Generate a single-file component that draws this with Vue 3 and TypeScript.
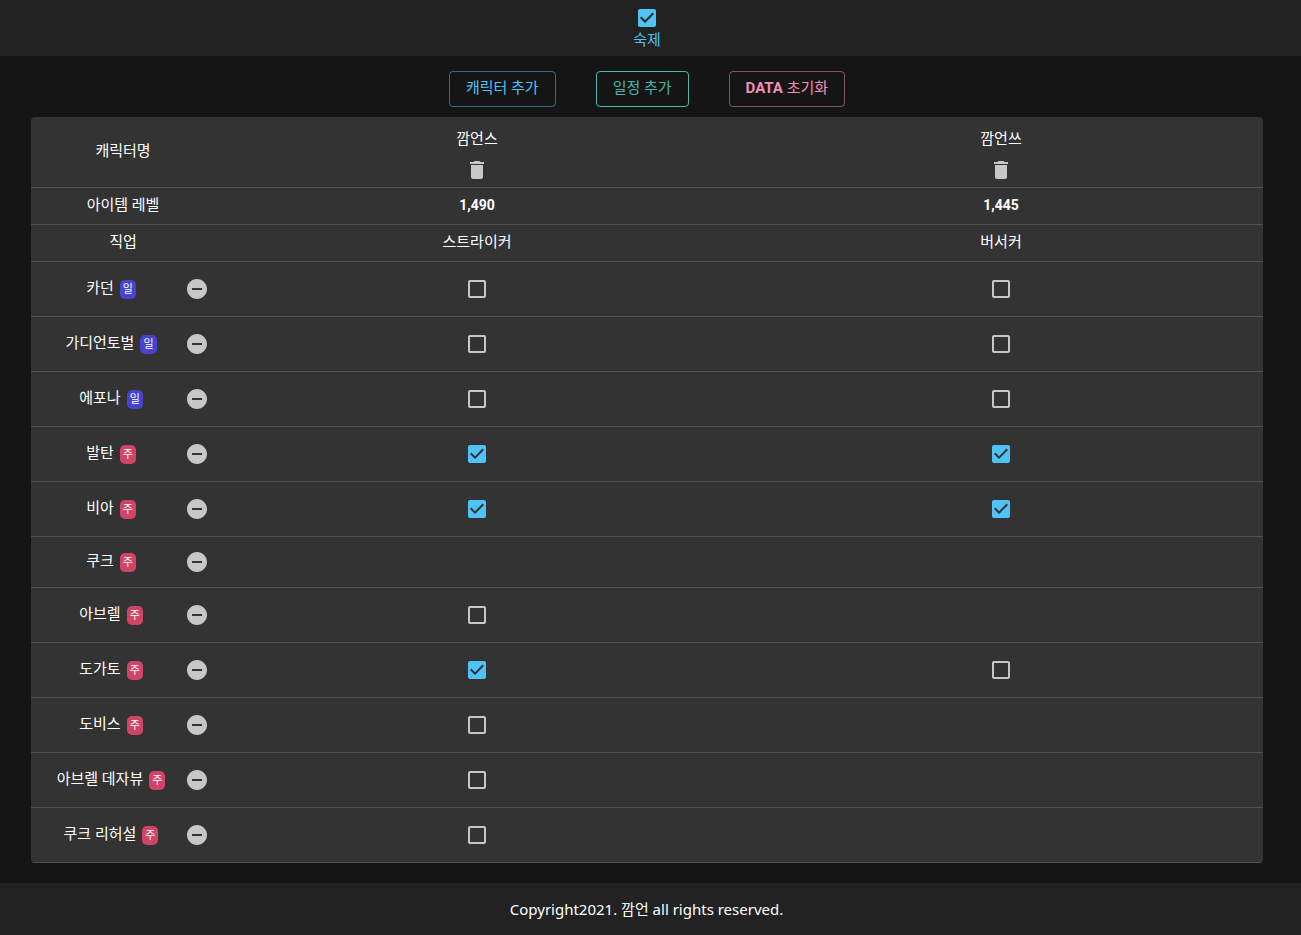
<script setup lang="ts">
import { reactive } from 'vue'

type Cycle = 'day' | 'week'

interface Character {
  name: string
  level: number
  job: string
}

interface Task {
  name: string
  cycle: Cycle
  checks: (boolean | null)[]
}

const characters: Character[] = [
  { name: '깜언스', level: 1490, job: '스트라이커' },
  { name: '깜언쓰', level: 1445, job: '버서커' },
]

const tasks = reactive<Task[]>([
  { name: '카던', cycle: 'day', checks: [false, false] },
  { name: '가디언토벌', cycle: 'day', checks: [false, false] },
  { name: '에포나', cycle: 'day', checks: [false, false] },
  { name: '발탄', cycle: 'week', checks: [true, true] },
  { name: '비아', cycle: 'week', checks: [true, true] },
  { name: '쿠크', cycle: 'week', checks: [null, null] },
  { name: '아브렐', cycle: 'week', checks: [false, null] },
  { name: '도가토', cycle: 'week', checks: [true, false] },
  { name: '도비스', cycle: 'week', checks: [false, null] },
  { name: '아브렐 데자뷰', cycle: 'week', checks: [false, null] },
  { name: '쿠크 리허설', cycle: 'week', checks: [false, null] },
])

const cycleLabel: Record<Cycle, string> = { day: '일', week: '주' }

const icons = {
  checked:
    'M19 3H5c-1.11 0-2 .9-2 2v14c0 1.1.89 2 2 2h14c1.11 0 2-.9 2-2V5c0-1.1-.89-2-2-2zm-9 14l-5-5 1.41-1.41L10 14.17l7.59-7.59L19 8l-9 9z',
  blank:
    'M19 5v14H5V5h14m0-2H5c-1.1 0-2 .9-2 2v14c0 1.1.9 2 2 2h14c1.1 0 2-.9 2-2V5c0-1.1-.9-2-2-2z',
  remove:
    'M12 2C6.48 2 2 6.48 2 12s4.48 10 10 10 10-4.48 10-10S17.52 2 12 2zm5 11H7v-2h10v2z',
  trash:
    'M6 19c0 1.1.9 2 2 2h8c1.1 0 2-.9 2-2V7H6v12zM19 4h-3.5l-1-1h-5l-1 1H5v2h14V4z',
}
</script>

<template>
  <div class="page">
    <header class="bar">
      <button type="button" class="tab">
        <svg class="icon" viewBox="0 0 24 24" aria-hidden="true"><path :d="icons.checked" /></svg>
        <span>숙제</span>
      </button>
    </header>

    <main class="content">
      <div class="actions">
        <button type="button" class="action blue">캐릭터 추가</button>
        <button type="button" class="action teal">일정 추가</button>
        <button type="button" class="action pink"><b>DATA</b> 초기화</button>
      </div>

      <table class="board">
        <colgroup>
          <col class="label-col" />
          <col v-for="c in characters" :key="c.name" />
        </colgroup>
        <thead>
          <tr class="names">
            <th scope="col">캐릭터명</th>
            <th v-for="c in characters" :key="c.name" scope="col">
              <div class="character">
                <span>{{ c.name }}</span>
                <button type="button" class="icon-button" :aria-label="c.name">
                  <svg class="icon" viewBox="0 0 24 24" aria-hidden="true"><path :d="icons.trash" /></svg>
                </button>
              </div>
            </th>
          </tr>
        </thead>
        <tbody>
          <tr class="info">
            <th scope="row">아이템 레벨</th>
            <td v-for="c in characters" :key="c.name" class="level">{{ c.level.toLocaleString('en-US') }}</td>
          </tr>
          <tr class="info">
            <th scope="row">직업</th>
            <td v-for="c in characters" :key="c.name">{{ c.job }}</td>
          </tr>
          <tr v-for="task in tasks" :key="task.name" class="task">
            <th scope="row" class="task-head">
              <div class="task-label">
                <span class="task-name">
                  <span class="task-title">{{ task.name }}</span>
                  <span class="badge" :class="task.cycle">{{ cycleLabel[task.cycle] }}</span>
                </span>
                <button type="button" class="icon-button" :aria-label="task.name">
                  <svg class="icon" viewBox="0 0 24 24" aria-hidden="true"><path :d="icons.remove" /></svg>
                </button>
              </div>
            </th>
            <td v-for="(done, i) in task.checks" :key="i">
              <label v-if="done !== null" class="check" :class="{ on: done }">
                <input v-model="task.checks[i]" type="checkbox" :aria-label="task.name + ' ' + characters[i].name" />
                <svg class="icon" viewBox="0 0 24 24" aria-hidden="true">
                  <path :d="done ? icons.checked : icons.blank" />
                </svg>
              </label>
            </td>
          </tr>
        </tbody>
      </table>
    </main>

    <footer class="footer">Copyright2021. 깜언 all rights reserved.</footer>
  </div>
</template>

<style>
body {
  margin: 0;
  background: #151515;
}
</style>

<style scoped>
.page {
  display: flex;
  flex-direction: column;
  min-height: 100vh;
  box-sizing: border-box;
  color: #fff;
  font-family: Roboto, "Noto Sans CJK KR", sans-serif;
  font-size: 15px;
  line-height: 20px;
}

button {
  font: inherit;
  color: inherit;
  background: none;
  border: 0;
  padding: 0;
  cursor: pointer;
}

.icon {
  display: block;
  width: 24px;
  height: 24px;
  fill: currentColor;
}

.bar {
  display: flex;
  justify-content: center;
  height: 56px;
  padding-right: 7px;
  background: #222;
}

.tab {
  display: flex;
  flex-direction: column;
  align-items: center;
  justify-content: center;
  padding: 0 12px;
  color: #4fc3f7;
}

.content {
  flex: 1;
  padding: 15px 38px 20px 31px;
}

.actions {
  display: flex;
  justify-content: center;
  gap: 40px;
  margin-bottom: 10px;
}

.action {
  height: 36px;
  padding: 0 16px 2px;
  border: 1px solid;
  border-radius: 4px;
}

.action b {
  font-size: 15px;
}

.blue {
  color: #4fc3f7;
  border-color: rgba(79, 195, 247, 0.5);
}

.teal {
  color: #4db6ac;
  border-color: #4db6ac;
}

.pink {
  color: #f48fb1;
  border-color: rgba(244, 143, 177, 0.5);
}

.board {
  width: 100%;
  table-layout: fixed;
  border-collapse: separate;
  border-spacing: 0;
  background: #333;
  border-radius: 4px;
  overflow: hidden;
  text-align: center;
}

.label-col {
  width: 184px;
}

.board th,
.board td {
  box-sizing: border-box;
  padding: 0;
  border-bottom: 1px solid #515151;
  font-weight: 400;
  vertical-align: middle;
}

.board .names th {
  height: 71px;
  padding-bottom: 2px;
}

.character {
  display: flex;
  flex-direction: column;
  align-items: center;
  gap: 9px;
  padding-top: 8px;
}

.board .info th,
.board .info td {
  height: 37px;
  padding-bottom: 2px;
}

.board .level {
  font-size: 14px;
  font-weight: 700;
}

.icon-button,
.check {
  color: #c7c7c7;
}

.board .task-head {
  padding: 13px 6px 13px 16px;
}

.task-label {
  display: flex;
  align-items: center;
  gap: 10px;
}

.task-name {
  flex: 1;
  display: flex;
  align-items: center;
  justify-content: center;
  gap: 6px;
  white-space: nowrap;
}

.task-title {
  padding-bottom: 2px;
}

.badge {
  padding: 0 3px;
  border-radius: 5px;
  font-size: 11px;
  line-height: 19px;
}

.day {
  background: #4644ce;
}

.week {
  background: #d04468;
}

.check {
  display: inline-grid;
  padding: 15px;
  vertical-align: middle;
  cursor: pointer;
}

.check.on {
  color: #4fc3f7;
}

.check input,
.check .icon {
  grid-area: 1 / 1;
}

.check input {
  width: 24px;
  height: 24px;
  margin: 0;
  opacity: 0;
}

.footer {
  padding: 16px 8px 16px 0;
  background: #222;
  font-family: "Noto Sans", "Noto Sans CJK KR", sans-serif;
  text-align: center;
}
</style>
